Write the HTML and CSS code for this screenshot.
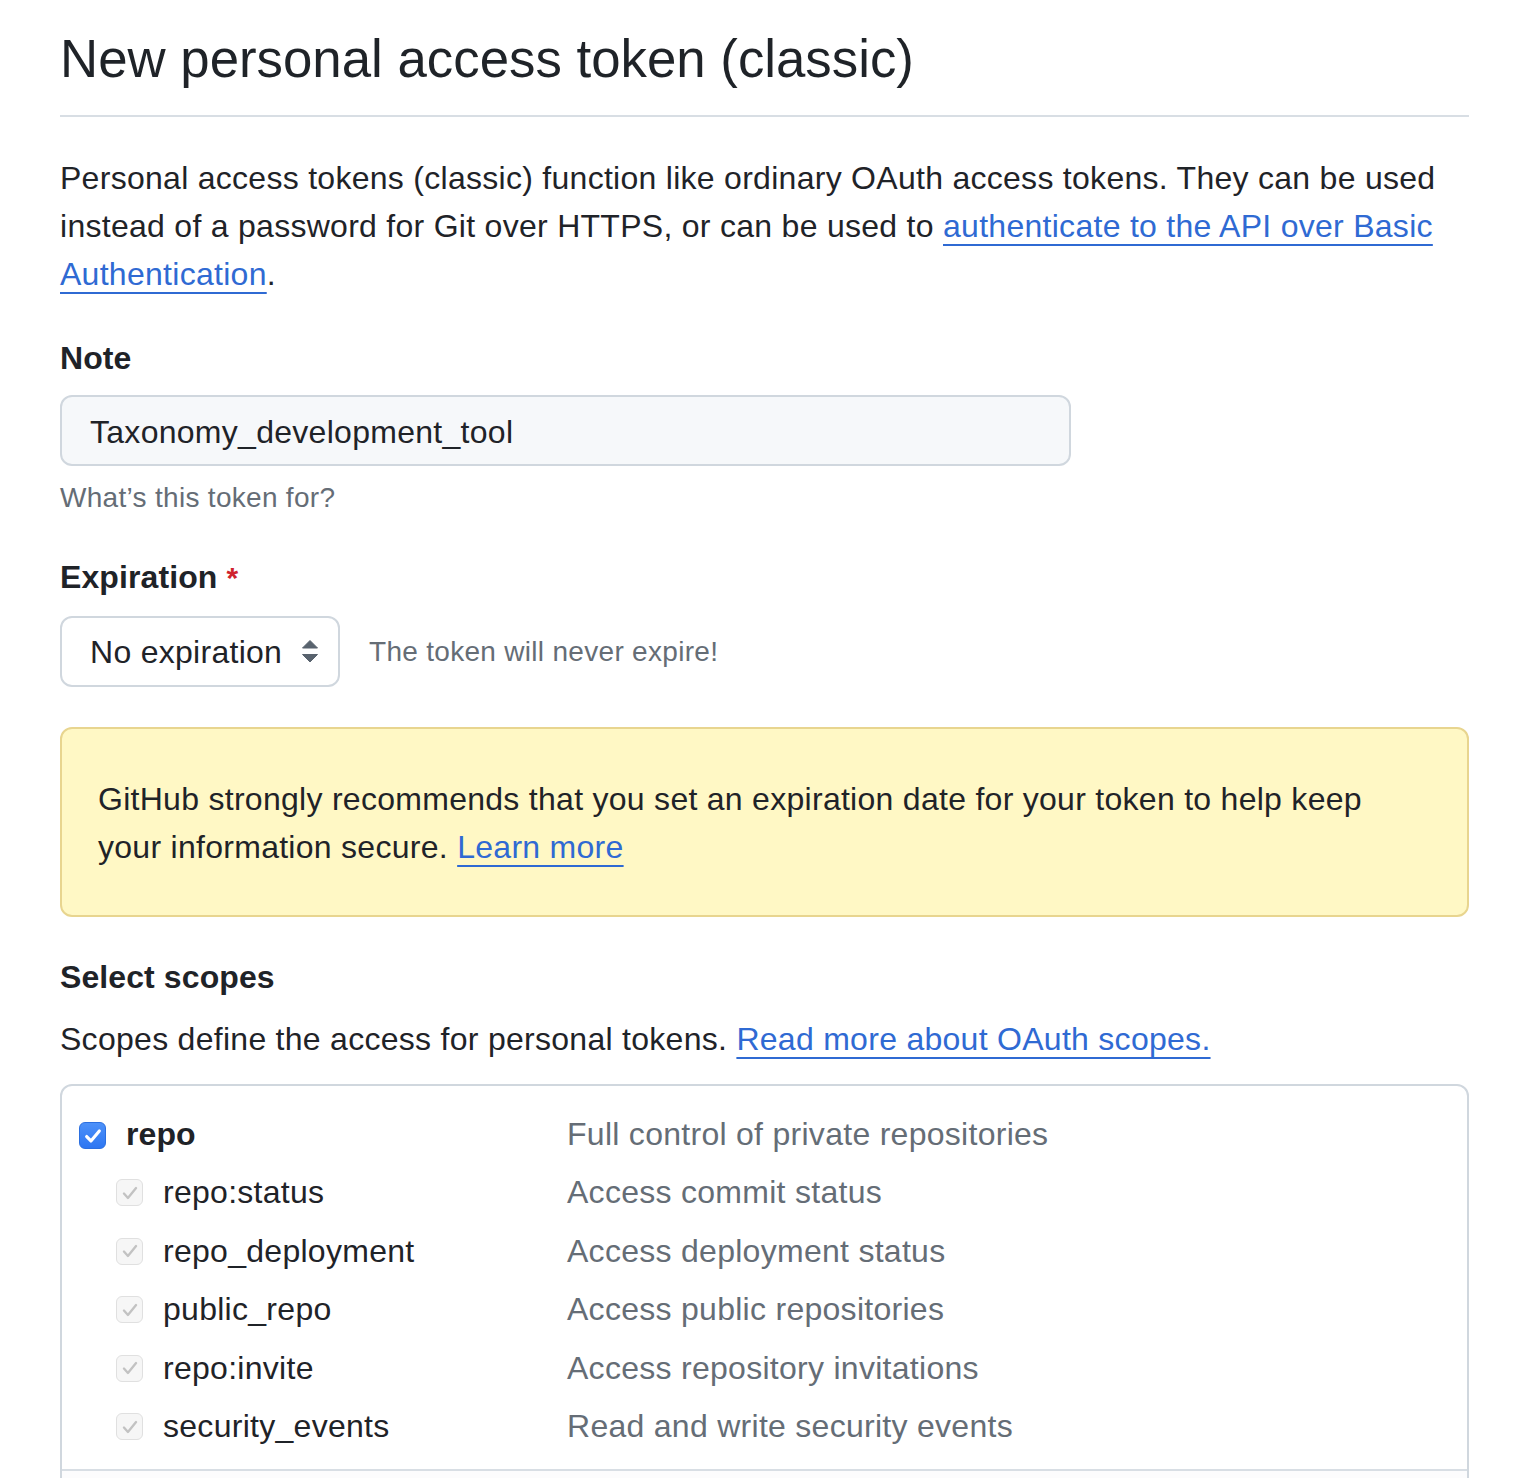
FILE: index.html
```html
<!DOCTYPE html>
<html lang="en">
<head>
<meta charset="utf-8">
<title>New personal access token (classic)</title>
<link rel="stylesheet" href="styles.css">
</head>
<body>
<div class="page">
  <div class="subhead">
    <h1 class="subhead-title">New personal access token (classic)</h1>
  </div>

  <p class="intro">Personal access tokens (classic) function like ordinary OAuth access tokens. They can be used instead of a password for Git over HTTPS, or can be used to <a class="link" href="#">authenticate to the API over Basic Authentication</a>.</p>

  <div class="field field-note">
    <label class="field-label" for="note">Note</label>
    <input class="text-input" id="note" type="text" value="Taxonomy_development_tool">
    <p class="field-hint">What’s this token for?</p>
  </div>

  <div class="field field-expiration">
    <div class="field-label">Expiration <span class="required">*</span></div>
    <div class="expiration-row">
      <div class="select-box">
        <span class="select-value">No expiration</span>
        <svg class="select-arrows" width="18" height="23" viewBox="0 0 18 23" aria-hidden="true">
          <path d="M9 0.5 L16.5 8 L1.5 8 Z" fill="#59636e" stroke="#59636e" stroke-width="1" stroke-linejoin="round"/>
          <path d="M1.5 14.5 L16.5 14.5 L9 22 Z" fill="#59636e" stroke="#59636e" stroke-width="1" stroke-linejoin="round"/>
        </svg>
      </div>
      <span class="expiration-note">The token will never expire!</span>
    </div>
  </div>

  <div class="flash-warn">GitHub strongly recommends that you set an expiration date for your token to help keep your information secure. <a class="link" href="#">Learn more</a></div>

  <h2 class="section-title">Select scopes</h2>
  <p class="section-desc">Scopes define the access for personal tokens. <a class="link" href="#">Read more about OAuth scopes.</a></p>

  <div class="scope-box">
    <div class="scope-group">
      <div class="scope-row scope-parent">
        <div class="scope-name">
          <span class="checkbox checkbox-on">
            <svg width="16" height="16" viewBox="0 0 16 16" aria-hidden="true"><path d="M3.4 8.4 L6.5 11.6 L12.6 4.4" fill="none" stroke="#ffffff" stroke-width="2.3" stroke-linecap="round" stroke-linejoin="round"/></svg>
          </span>
          <span class="scope-label">repo</span>
        </div>
        <div class="scope-desc">Full control of private repositories</div>
      </div>
      <div class="scope-row scope-child">
        <div class="scope-name">
          <span class="checkbox checkbox-disabled"><svg width="16" height="16" viewBox="0 0 16 16" aria-hidden="true"><path d="M3.6 8.4 L6.5 11.6 L12.4 4.4" fill="none" stroke="#c2c2c2" stroke-width="1.7" stroke-linecap="round" stroke-linejoin="round"/></svg></span>
          <span class="scope-label">repo:status</span>
        </div>
        <div class="scope-desc">Access commit status</div>
      </div>
      <div class="scope-row scope-child">
        <div class="scope-name">
          <span class="checkbox checkbox-disabled"><svg width="16" height="16" viewBox="0 0 16 16" aria-hidden="true"><path d="M3.6 8.4 L6.5 11.6 L12.4 4.4" fill="none" stroke="#c2c2c2" stroke-width="1.7" stroke-linecap="round" stroke-linejoin="round"/></svg></span>
          <span class="scope-label">repo_deployment</span>
        </div>
        <div class="scope-desc">Access deployment status</div>
      </div>
      <div class="scope-row scope-child">
        <div class="scope-name">
          <span class="checkbox checkbox-disabled"><svg width="16" height="16" viewBox="0 0 16 16" aria-hidden="true"><path d="M3.6 8.4 L6.5 11.6 L12.4 4.4" fill="none" stroke="#c2c2c2" stroke-width="1.7" stroke-linecap="round" stroke-linejoin="round"/></svg></span>
          <span class="scope-label">public_repo</span>
        </div>
        <div class="scope-desc">Access public repositories</div>
      </div>
      <div class="scope-row scope-child">
        <div class="scope-name">
          <span class="checkbox checkbox-disabled"><svg width="16" height="16" viewBox="0 0 16 16" aria-hidden="true"><path d="M3.6 8.4 L6.5 11.6 L12.4 4.4" fill="none" stroke="#c2c2c2" stroke-width="1.7" stroke-linecap="round" stroke-linejoin="round"/></svg></span>
          <span class="scope-label">repo:invite</span>
        </div>
        <div class="scope-desc">Access repository invitations</div>
      </div>
      <div class="scope-row scope-child">
        <div class="scope-name">
          <span class="checkbox checkbox-disabled"><svg width="16" height="16" viewBox="0 0 16 16" aria-hidden="true"><path d="M3.6 8.4 L6.5 11.6 L12.4 4.4" fill="none" stroke="#c2c2c2" stroke-width="1.7" stroke-linecap="round" stroke-linejoin="round"/></svg></span>
          <span class="scope-label">security_events</span>
        </div>
        <div class="scope-desc">Read and write security events</div>
      </div>
    </div>
    <div class="scope-group scope-group-next"></div>
  </div>
</div>
</body>
</html>
```

FILE: styles.css
```css
html {
  overflow: hidden;
}

body {
  margin: 0;
  background: #ffffff;
  color: #1f2328;
  font-family: "Liberation Sans", Arial, sans-serif;
  font-size: 32px;
  letter-spacing: 0.28px;
}

.page {
  padding: 0 59px 0 60px;
}

.subhead {
  padding-top: 26px;
  padding-bottom: 23px;
  border-bottom: 2px solid #d8dee4;
}

.subhead-title {
  margin: 0;
  font-size: 52.8px;
  line-height: 66px;
  font-weight: 400;
  letter-spacing: 0;
}

.intro {
  margin: 37px 0 0;
  line-height: 48px;
}

.link {
  color: #2f6ad3;
  text-decoration: underline;
  text-decoration-thickness: 2px;
  text-underline-offset: 7px;
}

.field-note {
  margin-top: 40px;
}

.field-label {
  display: block;
  font-weight: 700;
  line-height: 40px;
  letter-spacing: 0.1px;
}

.required {
  color: #cf222e;
  font-size: 30px;
}

.text-input {
  display: block;
  box-sizing: border-box;
  margin-top: 17px;
  width: 1011px;
  height: 71px;
  padding: 4px 28px 0;
  border: 2px solid #d0d7de;
  border-radius: 12px;
  background: #f6f8fa;
  color: #1f2328;
  font: inherit;
  letter-spacing: 0.28px;
  outline: none;
}

.field-hint {
  margin: 12px 0 0;
  font-size: 28px;
  line-height: 40px;
  color: #656d76;
  letter-spacing: 0.3px;
}

.field-expiration {
  margin-top: 39px;
}

.expiration-row {
  margin-top: 18px;
  display: flex;
  align-items: center;
}

.select-box {
  box-sizing: border-box;
  width: 280px;
  height: 71px;
  display: flex;
  align-items: center;
  justify-content: space-between;
  padding: 2px 19px 0 28px;
  border: 2px solid #d0d7de;
  border-radius: 12px;
  background: #ffffff;
}

.select-arrows {
  display: block;
  flex: none;
  margin-top: -2px;
}

.expiration-note {
  margin-left: 29px;
  font-size: 28px;
  color: #656d76;
  letter-spacing: 0.3px;
}

.flash-warn {
  margin-top: 40px;
  padding: 46px 36px 44px;
  border: 2px solid #e8d58f;
  border-radius: 12px;
  background: #fff8c5;
  line-height: 48px;
}

.section-title {
  margin: 40px 0 0;
  font-size: 32px;
  font-weight: 700;
  line-height: 40px;
  letter-spacing: 0.1px;
}

.section-desc {
  margin: 18px 0 0;
  line-height: 48px;
}

.scope-box {
  margin-top: 21px;
  border: 2px solid #d0d7de;
  border-radius: 12px;
  background: #ffffff;
}

.scope-group {
  padding: 19px 0 13px 17px;
}

.scope-group-next {
  border-top: 2px solid #d8dee4;
  min-height: 60px;
  background: #fcfcfd;
}

.scope-row {
  display: grid;
  grid-template-columns: 488px 1fr;
  align-items: center;
  height: 58.5px;
}

.scope-name {
  display: flex;
  align-items: center;
}

.scope-child .scope-name {
  padding-left: 37px;
}

.scope-label {
  margin-left: 20px;
}

.scope-parent .scope-label {
  font-weight: 700;
  letter-spacing: 0.1px;
}

.scope-desc {
  color: #656d76;
}

.checkbox {
  box-sizing: border-box;
  width: 27px;
  height: 27px;
  border-radius: 6px;
  display: flex;
  align-items: center;
  justify-content: center;
  flex: none;
}

.checkbox svg {
  width: 22px;
  height: 22px;
}

.scope-parent .checkbox {
  margin-top: 3px;
}

.checkbox-on {
  background: linear-gradient(#4d91f9, #2d76f2);
  border: 1px solid #2b6fe0;
}

.checkbox-disabled {
  background: #f6f6f6;
  border: 1px solid #e0e0e0;
}
```
